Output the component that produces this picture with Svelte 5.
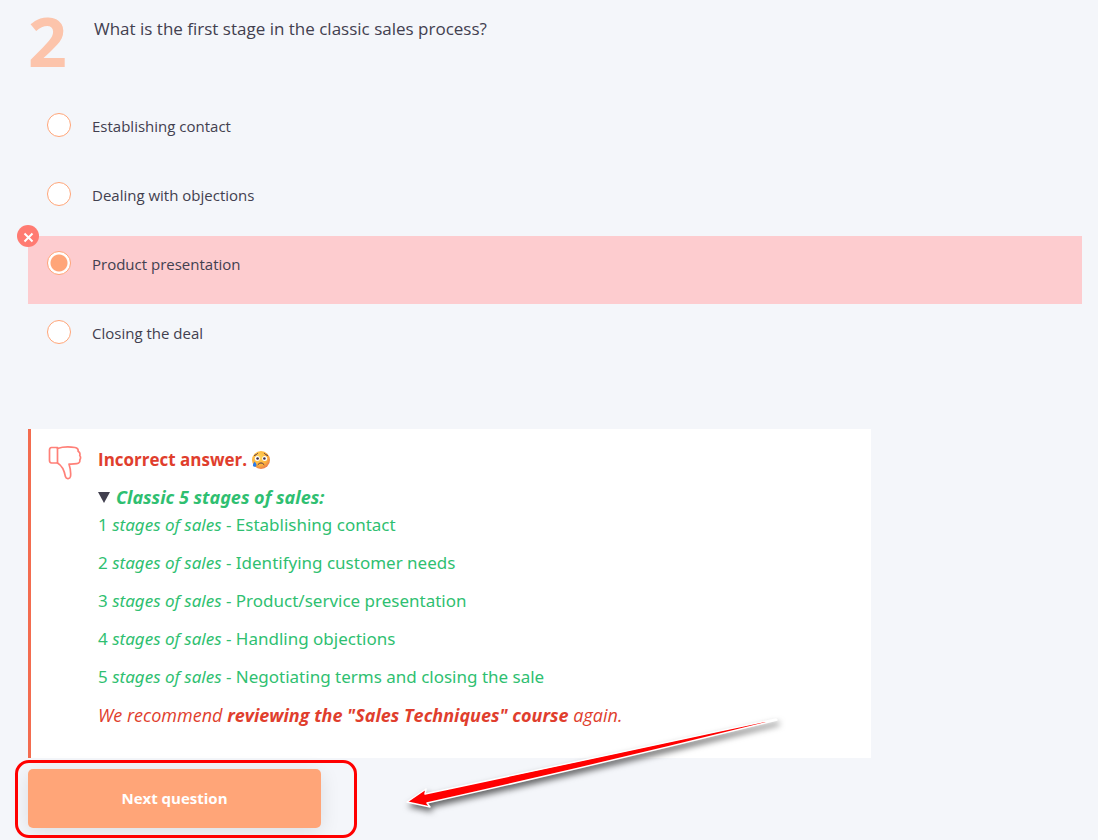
<script lang="ts">
	let selected = $state('presentation');

	const wrong = 'presentation';
	const options = [
		{ id: 'contact', label: 'Establishing contact' },
		{ id: 'objections', label: 'Dealing with objections' },
		{ id: 'presentation', label: 'Product presentation' },
		{ id: 'closing', label: 'Closing the deal' }
	];

	const stages = [
		'Establishing contact',
		'Identifying customer needs',
		'Product/service presentation',
		'Handling objections',
		'Negotiating terms and closing the sale'
	];
</script>

<main class="quiz">
	<header class="question">
		<span class="number">2</span>
		<h1 id="question-title">What is the first stage in the classic sales process?</h1>
	</header>

	<div class="options" role="radiogroup" aria-labelledby="question-title">
		{#each options as option (option.id)}
			<label class="option" class:wrong={option.id === wrong}>
				<input type="radio" name="answer" value={option.id} bind:group={selected} />
				<span>{option.label}</span>
				{#if option.id === wrong}
					<span class="badge">
						<svg viewBox="0 0 22 22" width="22" height="22" aria-hidden="true">
							<path d="M7.5 8.5l8 8M15.5 8.5l-8 8" fill="none" stroke="#fff" stroke-width="2" />
						</svg>
					</span>
				{/if}
			</label>
		{/each}
	</div>

	<section class="feedback">
		<svg class="thumb" viewBox="0 0 34 35" width="34" height="35" aria-hidden="true">
			<g fill="none" stroke="#ff8078" stroke-width="1.700" stroke-linejoin="round" stroke-linecap="round">
				<path d="M3.500 1.500H9.500v15.500H3.500q-2-.2-2-2.500v-10.500q0-2.300 2-2.500z" />
				<path d="M9.500 2.500C14 1 22 .8 27 1.500c2.500.4 3.400 2 3.100 3.800 1.700 1 2.200 2.700 1.600 4.200 1.100 1.400 1.100 3 .1 4.500.4 2.200-.9 3.400-3 3.600-2.500.4-5 .5-7.800.4 1.400 4.500 2 9 1.500 12.500-.4 2.500-4.200 3-5 .3C16.500 25.500 14 19.500 9.500 17" />
			</g>
		</svg>
		<div class="text">
			<p class="verdict">
				<strong>Incorrect answer.</strong>
				<svg class="face" viewBox="0 0 20 20" width="20" height="20" role="img" aria-label="Crying face">
					<defs>
						<radialGradient id="skin" cx="40%" cy="35%" r="70%">
							<stop offset="0" stop-color="#ffd75e" />
							<stop offset="0.65" stop-color="#fdb13c" />
							<stop offset="1" stop-color="#e77550" />
						</radialGradient>
					</defs>
					<circle cx="10" cy="10" r="9" fill="url(#skin)" />
					<circle cx="6.300" cy="8.500" r="2.500" fill="#fff" />
					<circle cx="13.700" cy="8.500" r="2.500" fill="#fff" />
					<circle cx="6.600" cy="8.500" r="1.300" fill="#40304d" />
					<circle cx="13.400" cy="8.500" r="1.300" fill="#40304d" />
					<path d="M3.500 5.500q2-.5 3-2M16.500 5.500q-2-.5-3-2M7 14.500q3-3.500 6 0" fill="none" stroke="#543247" stroke-width="1" stroke-linecap="round" />
					<path d="M3.700 11.500c1.300 2 2 3 1.700 4.200-.5 1.500-2.900 1.500-3.400 0-.3-1.200.5-2.200 1.700-4.200z" fill="#287cf0" />
				</svg>
			</p>
			<details open>
				<summary>Classic 5 stages of sales:</summary>
				{#each stages as stage, i}
					<p>{i + 1} <em>stages of sales</em> - {stage}</p>
				{/each}
			</details>
			<p class="advice">We recommend <strong>reviewing the "Sales Techniques" course</strong> again.</p>
		</div>
	</section>

	<div class="actions">
		<button type="button">Next question</button>
		<svg class="arrow" viewBox="0 0 390 110" width="390" height="110" aria-hidden="true">
			<path d="M6 92L25 79L24 84Q200 47 375 9L376 10Q200 54 26 93L29 97Z" fill="#f00" stroke="#fff" stroke-width="1.500" stroke-linejoin="round" />
		</svg>
	</div>
</main>

<style>
	:global(body) {
		margin: 0;
		background: #f4f6fa;
		color: #42404f;
		font-family: 'Open Sans', 'Noto Sans', sans-serif;
	}
	.quiz {
		padding: 0 16px 12px 28px;
	}
	.question {
		display: flex;
		align-items: flex-start;
		gap: 26px;
	}
	.number {
		width: 40px;
		font-size: 68px;
		line-height: 82px;
		font-weight: 700;
		color: #fcc4ab;
	}
	h1 {
		margin: 15px 0 0;
		font-size: 17px;
		line-height: 27px;
		font-weight: 400;
	}
	.options {
		display: grid;
		gap: 1px;
		margin-top: 16px;
	}
	.option {
		position: relative;
		display: flex;
		align-items: flex-start;
		gap: 21px;
		box-sizing: border-box;
		min-height: 68px;
		padding: 15px 19px;
		font-size: 15px;
		line-height: 26px;
		cursor: pointer;
	}
	.option.wrong {
		background: #fdcccf;
	}
	.option input {
		appearance: none;
		flex: none;
		box-sizing: border-box;
		width: 24px;
		height: 24px;
		margin: 0;
		border: 1px solid #ffa578;
		border-radius: 50%;
		background: #fff;
	}
	.option input:checked {
		background: radial-gradient(circle, #ffa578 8px, #fff 9px);
	}
	.badge {
		position: absolute;
		top: -11px;
		left: -11px;
		width: 22px;
		height: 22px;
		border-radius: 50%;
		background: #ff7b72;
	}
	.badge svg {
		display: block;
	}
	.feedback {
		display: flex;
		align-items: flex-start;
		gap: 16px;
		box-sizing: border-box;
		width: 80%;
		margin-top: 56px;
		padding: 17px 17px 18px;
		border-left: 3px solid #f36c4f;
		background: #fff;
	}
	.thumb {
		flex: none;
	}
	.text {
		font-size: 17px;
		line-height: 27px;
		color: #2fbf71;
	}
	.text p {
		margin: 0 0 11px;
	}
	.verdict {
		display: flex;
		align-items: center;
		gap: 4px;
	}
	.text .verdict,
	.text .advice {
		color: #e03e2d;
	}
	details {
		font-family: 'Noto Sans', 'Open Sans', sans-serif;
	}
	.advice {
		padding-top: 1px;
		font-size: 18px;
		font-style: italic;
	}
	summary {
		display: flex;
		align-items: center;
		gap: 6px;
		font-size: 18px;
		font-weight: 700;
		font-style: italic;
		cursor: pointer;
	}
	summary::before {
		content: '';
		border: 6px solid transparent;
		border-top: 11px solid #42404f;
		border-bottom: 0;
	}
	details:not([open]) summary::before {
		transform: rotate(-90deg);
	}
	.actions {
		position: relative;
		width: fit-content;
		margin-top: 11px;
	}
	.actions::after {
		content: '';
		position: absolute;
		inset: -9px -36px -10px -13px;
		border: 3px solid #f00;
		border-radius: 14px;
		pointer-events: none;
	}
	button {
		display: block;
		width: 293px;
		padding: 16px;
		border: 0;
		border-radius: 5px;
		background: #ffa578;
		box-shadow: 0 4px 20px rgba(0, 0, 0, 0.1);
		color: #fff;
		font: 700 15px/27px 'Open Sans', 'Noto Sans', sans-serif;
		cursor: pointer;
	}
	.arrow {
		position: absolute;
		left: 373px;
		top: -59px;
		filter: drop-shadow(2px 4px 3px rgba(0, 0, 0, 0.6));
		pointer-events: none;
	}
</style>
